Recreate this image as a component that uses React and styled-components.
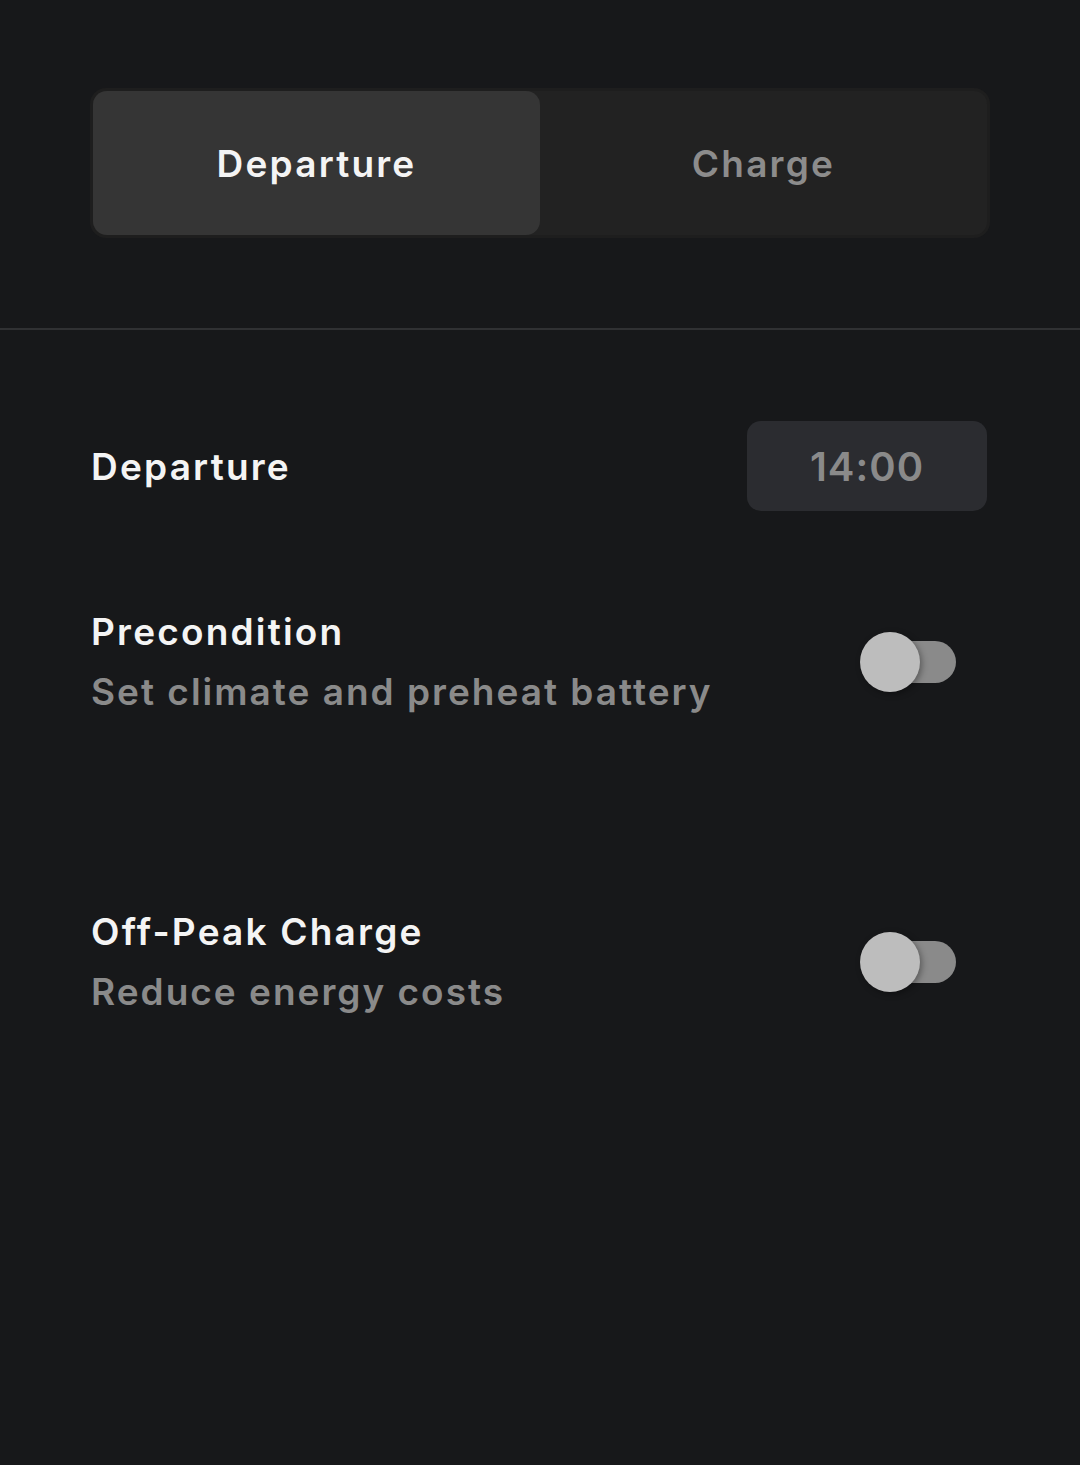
import React, { useState } from "react";
import styled, { createGlobalStyle } from "styled-components";

const Global = createGlobalStyle`
  html, body { margin: 0; padding: 0; background: #17181a; }
  body { font-family: Inter, "Noto Sans", "Liberation Sans", sans-serif; color: #f2f2f2; }
  * { box-sizing: border-box; }
`;

const Page = styled.div`
  min-height: 1465px;
  background: #17181a;
  padding-top: 88px;
`;

const TabsWrap = styled.div`
  padding: 0 90px;
`;

const Tabs = styled.div`
  display: grid;
  grid-template-columns: 1fr 1fr;
  height: 150px;
  background: #222222;
  border: 3px solid #1e1e1e;
  border-radius: 16px;
`;

const Tab = styled.button`
  border: none;
  border-radius: 14px;
  background: ${(p) => (p.$active ? "#353535" : "transparent")};
  color: ${(p) => (p.$active ? "#f4f4f4" : "#8c8c8c")};
  font-family: inherit;
  font-size: 37px;
  font-weight: 600;
  letter-spacing: 2.2px;
  cursor: pointer;
`;

const Divider = styled.hr`
  margin: 90px 0 0;
  border: none;
  height: 2px;
  background: #303133;
`;

const Section = styled.div`
  padding: 91px 93px 0 91px;
  display: flex;
  flex-direction: column;
`;

const Row = styled.div`
  display: flex;
  align-items: center;
  justify-content: space-between;
  margin-bottom: ${(p) => p.$mb || 0}px;
`;

const Label = styled.div`
  font-size: 37px;
  font-weight: 600;
  color: #f4f4f4;
  letter-spacing: 2.2px;
`;

const TextCol = styled.div`
  display: flex;
  flex-direction: column;
  gap: 15px;
`;

const Sub = styled.div`
  font-size: 37px;
  font-weight: 600;
  color: #8a8a8a;
  letter-spacing: 2px;
`;

const TimeBox = styled.div`
  width: 240px;
  height: 90px;
  border-radius: 14px;
  background: #2b2c30;
  display: flex;
  align-items: center;
  justify-content: center;
  font-size: 40px;
  font-weight: 600;
  color: #8a8a8a;
  letter-spacing: 1px;
`;

const SwitchTrack = styled.button`
  position: relative;
  width: 86px;
  height: 42px;
  margin-right: 31px;
  border: none;
  padding: 0;
  border-radius: 21px;
  background: #8a8a8a;
  cursor: pointer;
`;

const Knob = styled.span`
  position: absolute;
  top: 50%;
  left: ${(p) => (p.$on ? "56px" : "-10px")};
  width: 60px;
  height: 60px;
  margin-top: -30px;
  border-radius: 50%;
  background: #bdbdbd;
  box-shadow: 2px 2px 6px rgba(0, 0, 0, 0.35);
`;

function Switch() {
  const [on, setOn] = useState(false);
  return (
    <SwitchTrack onClick={() => setOn(!on)} aria-pressed={on}>
      <Knob $on={on} />
    </SwitchTrack>
  );
}

export default function App() {
  const [tab, setTab] = useState("departure");
  return (
    <Page>
      <Global />
      <TabsWrap>
        <Tabs>
          <Tab $active={tab === "departure"} onClick={() => setTab("departure")}>
            Departure
          </Tab>
          <Tab $active={tab === "charge"} onClick={() => setTab("charge")}>
            Charge
          </Tab>
        </Tabs>
      </TabsWrap>
      <Divider />
      <Section>
        <Row $mb={98}>
          <Label>Departure</Label>
          <TimeBox>14:00</TimeBox>
        </Row>
        <Row $mb={195}>
          <TextCol>
            <Label>Precondition</Label>
            <Sub>Set climate and preheat battery</Sub>
          </TextCol>
          <Switch />
        </Row>
        <Row>
          <TextCol>
            <Label>Off-Peak Charge</Label>
            <Sub>Reduce energy costs</Sub>
          </TextCol>
          <Switch />
        </Row>
      </Section>
    </Page>
  );
}
